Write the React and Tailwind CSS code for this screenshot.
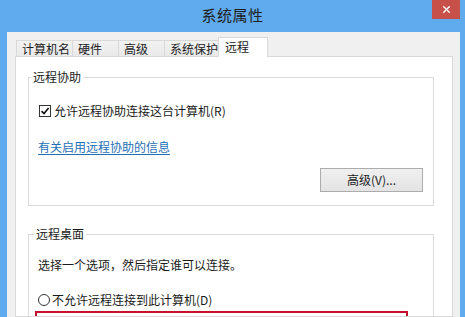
import { X } from 'lucide-react';

const font = "font-['Microsoft_YaHei','Noto_Sans_CJK_SC',sans-serif]";

const tabs = [
  { label: '计算机名', w: 'w-[57px]' },
  { label: '硬件', w: 'w-[47px]' },
  { label: '高级', w: 'w-[47px]' },
  { label: '系统保护', w: 'w-[56px]' },
];

const App = () => {
  return (
    <div className={`w-[465px] h-[317px] overflow-hidden bg-[#5fabee] flex flex-col text-[12px] leading-[16px] text-[#1a1a1a] ${font}`}>
      <div className="h-[32px] shrink-0 relative flex items-center justify-center pb-[2px]">
        <span className="text-[15px] text-[#202020] tracking-[0.5px]">系统属性</span>
        <div className="absolute right-[5px] top-0 w-[28px] h-[19px] bg-[#c7504a] flex items-center justify-center">
          <X size={11} strokeWidth={3} className="text-white" />
        </div>
      </div>

      <div className="flex-1 min-h-0 ml-[7px] mr-[5px] bg-[#f0f0f0] pt-[5px] flex flex-col">
        <div className="shrink-0 flex items-end pl-[9px]">
          {tabs.map((t, i) => (
            <div
              key={t.label}
              className={`${t.w} h-[16px] ${i > 0 ? '-ml-px' : ''} border border-b-0 border-[#d9d9d9] bg-gradient-to-b from-[#f2f2f2] to-[#e9e9e9] flex items-center pl-[5px] text-[#222] whitespace-nowrap`}
            >
              {t.label}
            </div>
          ))}
          <div className="relative z-10 -ml-[2px] -mb-px w-[50px] h-[20px] border border-b-0 border-[#d9d9d9] bg-white pl-[6px] pt-[1px]">
            远程
          </div>
        </div>

        <div className="flex-1 min-h-0 overflow-hidden ml-[8px] mr-[7px] bg-white border border-[#d9d9d9] pl-[12px] pr-[18px]">
          <fieldset className="mt-[12px] border border-[#dcdcdc] pb-[13px] pr-[10px]">
            <legend className="ml-[2px] px-[2px]">远程协助</legend>
            <div className="mt-[18px] h-[16px] pl-[10px] flex items-center gap-[3px]">
              <span className="w-[12px] h-[12px] border border-[#333] bg-white flex items-center justify-center">
                <svg width="10" height="10" viewBox="0 0 10 10">
                  <path d="M1.5 5.2 L4 7.6 L8.6 2" fill="none" stroke="#111" strokeWidth="1.6" />
                </svg>
              </span>
              <span>允许远程协助连接这台计算机(R)</span>
            </div>
            <div className="mt-[20px] h-[16px] pl-[9px]">
              <span className="text-[#1e6fb5] underline underline-offset-2">有关启用远程协助的信息</span>
            </div>
            <div className="mt-[13px] flex justify-end">
              <div className="w-[103px] h-[24px] border border-[#acacac] bg-gradient-to-b from-[#f0f0f0] to-[#e3e3e3] flex items-center justify-center text-[#222]">
                高级(V)...
              </div>
            </div>
          </fieldset>

          <fieldset className="mt-[20px] border border-[#dcdcdc] pb-[10px]">
            <legend className="ml-[5px] px-[2px]">远程桌面</legend>
            <div className="mt-[15px] h-[16px] pl-[9px]">选择一个选项，然后指定谁可以连接。</div>
            <div className="mt-[19px] h-[16px] pl-[9px] flex items-center gap-[2px]">
              <span className="w-[12px] h-[12px] rounded-full border border-[#333] bg-white" />
              <span>不允许远程连接到此计算机(D)</span>
            </div>
            <div className="mt-[3px] ml-[6px] w-[373px] h-[40px] border-2 border-[#c8102e]" />
          </fieldset>
        </div>
      </div>
    </div>
  );
};

export default App;
